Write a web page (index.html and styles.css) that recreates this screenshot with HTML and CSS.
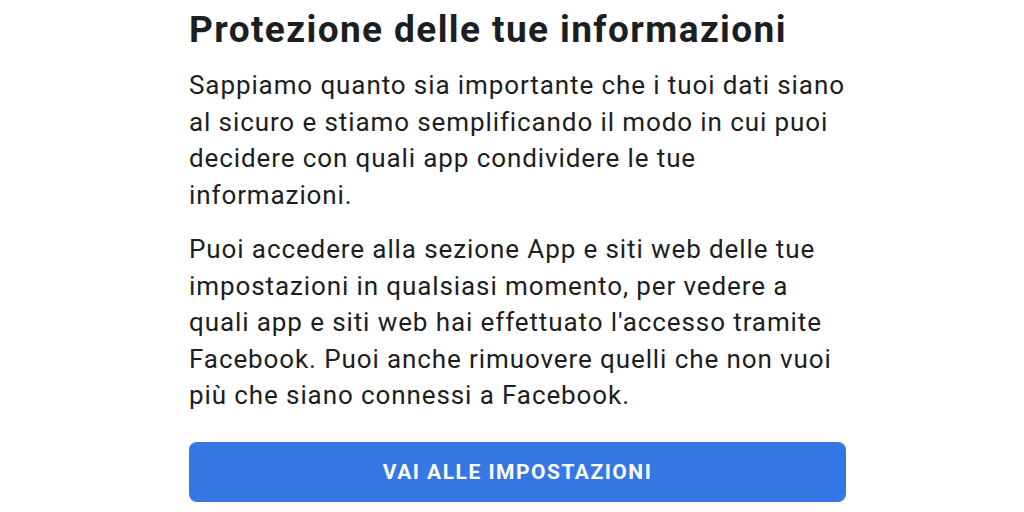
FILE: index.html
```html
<!DOCTYPE html>
<html>
<head>
    <title>Protezione delle tue informazioni</title>
    <link rel="stylesheet" href="styles.css">
</head>
<body>
    <div class="panel">
        <h1>Protezione delle tue informazioni</h1>
        <p>Sappiamo quanto sia importante che i tuoi dati siano al sicuro e stiamo semplificando il modo in cui puoi decidere con quali app condividere le tue informazioni.</p>
        <p>Puoi accedere alla sezione App e siti web delle tue impostazioni in qualsiasi momento, per vedere a quali app e siti web hai effettuato l'accesso tramite Facebook. Puoi anche rimuovere quelli che non vuoi più che siano connessi a Facebook.</p>
        <button class="settings">VAI ALLE IMPOSTAZIONI</button>
    </div>
</body>
</html>
```

FILE: styles.css
```css
body {
    font-family: Roboto, 'Noto Sans', sans-serif;
    margin: 0;
    background-color: #fff;
    color: #1c1e21;
}

.panel {
    width: 657px;
    padding-left: 189px;
}

h1 {
    font-size: 37px;
    font-weight: bold;
    letter-spacing: 1.4px;
    margin: 0;
    padding-top: 8px;
    line-height: 44px;
}

p {
    font-size: 26px;
    line-height: 36.5px;
    letter-spacing: 0.9px;
    margin: 15px 0 0;
}

p + p {
    margin-top: 18px;
}

.settings {
    display: block;
    width: 100%;
    height: 60px;
    margin-top: 28px;
    background-color: #3578e5;
    color: #fff;
    font-family: Roboto, sans-serif;
    font-size: 21px;
    font-weight: bold;
    letter-spacing: 1.5px;
    border: none;
    border-radius: 8px;
    cursor: pointer;
}
```
